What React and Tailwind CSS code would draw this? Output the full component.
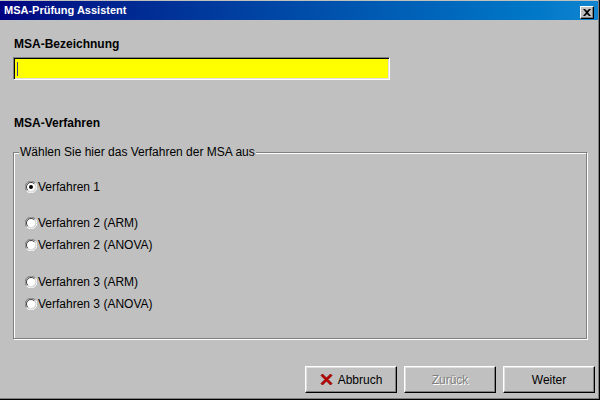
import React from "react";

function Radio({ checked }) {
  return (
    <svg width="12" height="12" viewBox="0 0 12 12" className="shrink-0">
      <path d="M10.5 2.2 A5.5 5.5 0 0 0 1.5 9.8" fill="none" stroke="#808080" strokeWidth="1" />
      <path d="M1.5 9.8 A5.5 5.5 0 0 0 10.5 2.2" fill="none" stroke="#ffffff" strokeWidth="1" />
      <circle cx="6" cy="6" r="4.5" fill="#ffffff" />
      <path d="M9.2 2.8 A4.5 4.5 0 0 0 2.8 9.2" fill="none" stroke="#404040" strokeWidth="1" />
      <path d="M2.8 9.2 A4.5 4.5 0 0 0 9.2 2.8" fill="none" stroke="#dfdfdf" strokeWidth="1" />
      {checked && <circle cx="6" cy="6" r="2" fill="#000000" />}
    </svg>
  );
}

function RadioRow({ label, checked }) {
  return (
    <div className="flex items-center h-[22px]">
      <Radio checked={checked} />
      <span className="ml-px">{label}</span>
    </div>
  );
}

function Button({ children }) {
  return (
    <button
      className="w-[92px] h-[27px] flex items-center justify-center bg-[#c0c0c0] border border-t-white border-l-white border-b-black border-r-black shadow-[inset_-1px_-1px_0_#808080,inset_1px_1px_0_#dfdfdf]"
    >
      {children}
    </button>
  );
}

export default function App() {
  return (
    <div
      className="w-[600px] h-[400px] bg-[#c0c0c0] flex flex-col border-r border-b border-r-black border-b-black shadow-[inset_-1px_-1px_0_#808080] text-[12px] text-black"
      style={{ fontFamily: '"Liberation Sans", Arial, sans-serif' }}
    >
      <div className="h-[19px] mt-px mr-px flex items-center justify-between bg-gradient-to-r from-[#000080] to-[#1084d0] pl-[4px] pr-[4px] shrink-0">
        <span className="text-white font-bold text-[11px] leading-none">MSA-Prüfung Assistent</span>
        <div className="w-[14px] h-[13px] mt-[3px] bg-[#c0c0c0] border border-t-white border-l-white border-b-black border-r-black shadow-[inset_-1px_-1px_0_#808080] flex items-center justify-center">
          <svg width="8" height="7" viewBox="0 0 8 7">
            <path d="M0 0h2l2 2 2-2h2L5 3.5 8 7H6L4 5 2 7H0l3-3.5z" fill="#000" />
          </svg>
        </div>
      </div>

      <div className="flex-1 flex flex-col px-[13px]">
        <div className="mt-[17px] font-bold leading-[14px] pl-px">MSA-Bezeichnung</div>
        <div className="mt-[6px] w-[377px] h-[23px] bg-[#ffff00] border border-t-[#808080] border-l-[#808080] border-b-white border-r-white shadow-[inset_1px_1px_0_#000,inset_-1px_-1px_0_#dfdfdf] flex items-center pl-[3px]">
          <div className="w-px h-[14px] bg-[#404080]" />
        </div>

        <div className="mt-[36px] font-bold leading-[14px] pl-px">MSA-Verfahren</div>

        <fieldset className="mt-[15px] w-[574px] h-[194px] mx-0 border border-[#808080] shadow-[1px_1px_0_#ffffff,inset_1px_1px_0_#ffffff]">
          <legend className="ml-[5px] px-px bg-[#c0c0c0] leading-[14px] text-[#000]">
            Wählen Sie hier das Verfahren der MSA aus
          </legend>
          <div className="flex flex-col mt-[17px] pl-[11px]">
            <RadioRow label="Verfahren 1" checked />
            <div className="h-[14px]" />
            <RadioRow label="Verfahren 2 (ARM)" />
            <RadioRow label="Verfahren 2 (ANOVA)" />
            <div className="h-[15px]" />
            <RadioRow label="Verfahren 3 (ARM)" />
            <RadioRow label="Verfahren 3 (ANOVA)" />
          </div>
        </fieldset>
      </div>

      <div className="flex justify-end gap-[7px] pr-[4px] pb-[6px] shrink-0">
        <Button>
          <svg width="13" height="13" viewBox="0 0 13 13" className="mr-[5px]">
            <path d="M1 2.5 L2.5 1 L6.5 5 L10.5 1 L12 2.5 L8 6.5 L12 10.5 L10.5 12 L6.5 8 L2.5 12 L1 10.5 L5 6.5 Z" fill="#c00000" stroke="#800000" strokeWidth="0.8" strokeLinejoin="round" />
          </svg>
          <span>Abbruch</span>
        </Button>
        <Button>
          <span className="text-[#808080] [text-shadow:1px_1px_0_#ffffff]">Zurück</span>
        </Button>
        <Button>
          <span>Weiter</span>
        </Button>
      </div>
    </div>
  );
}
